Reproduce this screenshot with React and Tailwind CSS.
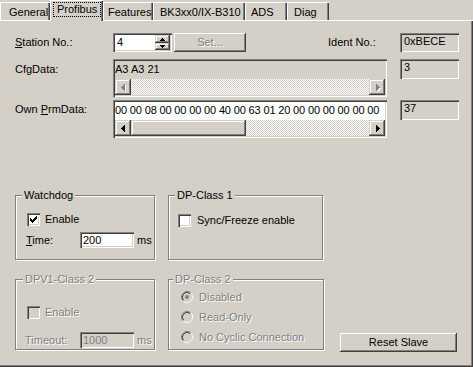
import React from "react";

const SUNK =
  "shadow-[inset_1px_1px_0_#808080,inset_2px_2px_0_#404040,inset_-1px_-1px_0_#ffffff,inset_-2px_-2px_0_#d4d0c8]";
const RAISED =
  "shadow-[inset_-1px_-1px_0_#404040,inset_1px_1px_0_#ffffff,inset_-2px_-2px_0_#808080]";
const SBTN =
  "shadow-[inset_-1px_-1px_0_#404040,inset_1px_1px_0_#d4d0c8,inset_-2px_-2px_0_#808080,inset_2px_2px_0_#ffffff]";
const DIS = "text-[#808080] [text-shadow:1px_1px_0_#ffffff]";
const CHECKER =
  "bg-[image:repeating-conic-gradient(#ffffff_0_25%,#d4d0c8_0_50%)] bg-size-[2px_2px] bg-[length:2px_2px]";
const TAB =
  "h-[18px] border-l border-t border-white shadow-[inset_-1px_0_0_#404040,inset_-2px_0_0_#808080] pt-[3px] whitespace-nowrap shrink-0";
const GROUP =
  "relative shrink-0 border border-[#808080] shadow-[1px_1px_0_#ffffff,inset_1px_1px_0_#ffffff]";

const SHAPES = {
  left: { w: 4, h: 7, r: [[0, 3, 1, 1], [1, 2, 1, 3], [2, 1, 1, 5], [3, 0, 1, 7]] },
  right: { w: 4, h: 7, r: [[3, 3, 1, 1], [2, 2, 1, 3], [1, 1, 1, 5], [0, 0, 1, 7]] },
  up: { w: 5, h: 3, r: [[2, 0, 1, 1], [1, 1, 3, 1], [0, 2, 5, 1]] },
  down: { w: 5, h: 3, r: [[0, 0, 5, 1], [1, 1, 3, 1], [2, 2, 1, 1]] },
};

function Arrow({ dir, disabled }) {
  const s = SHAPES[dir];
  return (
    <svg width={s.w + 1} height={s.h + 1} shapeRendering="crispEdges" className="block">
      {disabled &&
        s.r.map((r, i) => (
          <rect key={"s" + i} x={r[0] + 1} y={r[1] + 1} width={r[2]} height={r[3]} fill="#ffffff" />
        ))}
      {s.r.map((r, i) => (
        <rect key={i} x={r[0]} y={r[1]} width={r[2]} height={r[3]} fill={disabled ? "#808080" : "#000000"} />
      ))}
    </svg>
  );
}

function ScrollBar({ enabled }) {
  return (
    <div className="h-[16px] flex">
      <div className={"w-[16px] h-[16px] shrink-0 flex items-center justify-center pl-[1px] pt-[1px] " + SBTN}>
        <Arrow dir="left" disabled={!enabled} />
      </div>
      {enabled && <div className={"w-[115px] h-[16px] shrink-0 " + SBTN} />}
      <div className={"flex-1 h-[16px] " + CHECKER} />
      <div className={"w-[16px] h-[16px] shrink-0 flex items-center justify-center pl-[3px] pt-[1px] " + SBTN}>
        <Arrow dir="right" disabled={!enabled} />
      </div>
    </div>
  );
}

const CHECK = [
  [9, 3, 1, 1],
  [8, 4, 2, 1],
  [3, 5, 1, 1],
  [7, 5, 3, 1],
  [3, 6, 2, 1],
  [6, 6, 3, 1],
  [3, 7, 5, 1],
  [4, 8, 3, 1],
  [5, 9, 1, 1],
];

function Check({ checked, disabled }) {
  return (
    <div className={"w-[13px] h-[13px] shrink-0 " + SUNK + (disabled ? " bg-[#d4d0c8]" : " bg-white")}>
      {checked && (
        <svg width="13" height="13" shapeRendering="crispEdges" className="block">
          {CHECK.map((r, i) => (
            <rect key={i} x={r[0]} y={r[1]} width={r[2]} height={r[3]} fill="#000000" />
          ))}
        </svg>
      )}
    </div>
  );
}

function Radio({ checked, disabled }) {
  return (
    <svg width="12" height="12" className="block shrink-0">
      <circle cx="6" cy="6" r="4" fill={disabled ? "#d4d0c8" : "#ffffff"} />
      <path d="M2.11 9.89 A5.5 5.5 0 0 1 9.89 2.11" stroke="#808080" fill="none" />
      <path d="M9.89 2.11 A5.5 5.5 0 0 1 2.11 9.89" stroke="#ffffff" fill="none" />
      <path d="M2.82 9.18 A4.5 4.5 0 0 1 9.18 2.82" stroke="#404040" fill="none" />
      <path d="M9.18 2.82 A4.5 4.5 0 0 1 2.82 9.18" stroke="#d4d0c8" fill="none" />
      {checked && <circle cx="6" cy="6" r="2" fill={disabled ? "#808080" : "#000000"} />}
    </svg>
  );
}

export default function App() {
  return (
    <div className="w-[473px] h-[367px] bg-[#d4d0c8] flex flex-col overflow-hidden font-['Liberation_Sans',Arial,sans-serif] text-[11px] leading-[13px] text-black">
      {/* Tabs */}
      <div className="flex items-end h-[20px] shrink-0">
        <div className={TAB + " w-[50px] pl-[8px]"}>General</div>
        <div className="relative z-10 -mb-px h-[21px] w-[53px] shrink-0 bg-[#d4d0c8] border-l border-t border-white shadow-[inset_-1px_0_0_#404040,inset_-2px_0_0_#808080] pl-[2px] pt-[1px] whitespace-nowrap">
          <span className="inline-block border border-dotted border-black px-[3px] leading-[13px]">Profibus</span>
        </div>
        <div className={TAB + " w-[50px] pl-[4px]"}>Features</div>
        <div className={TAB + " w-[92px] pl-[6px]"}>BK3xx0/IX-B310</div>
        <div className={TAB + " w-[42px] pl-[5px]"}>ADS</div>
        <div className={TAB + " w-[42px] pl-[6px]"}>Diag</div>
      </div>

      {/* Panel */}
      <div className="flex-1 border-t border-white shadow-[inset_-1px_-1px_0_#404040,inset_-2px_-2px_0_#808080] flex flex-col pl-[15px]">
        {/* Row 1 */}
        <div className="flex h-[19px] mt-[12px]">
          <div className="w-[98px] shrink-0 self-center">
            <u>S</u>tation No.:
          </div>
          <div className={"w-[59px] h-[19px] shrink-0 flex p-[2px] " + SUNK}>
            <div className="flex-1 bg-white pl-[2px] pt-[1px]">4</div>
            <div className="w-[15px] flex flex-col">
              <div className={"h-[8px] flex items-center justify-center pl-[1px] pt-[1px] " + SBTN}>
                <Arrow dir="up" />
              </div>
              <div className={"h-[7px] flex items-center justify-center pl-[1px] " + SBTN}>
                <Arrow dir="down" />
              </div>
            </div>
          </div>
          <div className={"ml-[2px] w-[72px] h-[19px] shrink-0 flex items-center justify-center " + RAISED + " " + DIS}>
            Set...
          </div>
          <div className="ml-[82px] w-[72px] shrink-0 self-center">Ident No.:</div>
          <div className={"w-[59px] h-[19px] shrink-0 pl-[4px] pt-[2px] " + SUNK}>0xBECE</div>
        </div>

        {/* Row 2 */}
        <div className="flex mt-[7px]">
          <div className="w-[98px] shrink-0 pt-[4px]">CfgData:</div>
          <div className={"w-[274px] h-[38px] shrink-0 p-[2px] flex flex-col " + SUNK}>
            <div className="h-[18px] pt-[2px] whitespace-nowrap overflow-hidden">A3 A3 21</div>
            <ScrollBar enabled={false} />
          </div>
          <div className={"ml-[13px] w-[59px] h-[20px] shrink-0 pl-[4px] pt-[2px] " + SUNK}>3</div>
        </div>

        {/* Row 3 */}
        <div className="flex mt-[3px]">
          <div className="w-[98px] shrink-0 pt-[3px]">
            Own <u>P</u>rmData:
          </div>
          <div className={"w-[274px] h-[38px] shrink-0 p-[2px] flex flex-col " + SUNK}>
            <div className="h-[18px] pt-[2px] bg-white whitespace-nowrap overflow-hidden tracking-[-0.15px]">
              00 00 08 00 00 00 00 40 00 63 01 20 00 00 00 00 00 00
            </div>
            <ScrollBar enabled={true} />
          </div>
          <div className={"ml-[13px] w-[59px] h-[20px] shrink-0 pl-[4px] pt-[2px] " + SUNK}>37</div>
        </div>

        {/* Group row A */}
        <div className="flex mt-[57px]">
          <div className={GROUP + " w-[140px] h-[65px] pl-[11px] pt-[17px]"}>
            <span className="absolute left-[6px] top-[-7px] px-[2px] bg-[#d4d0c8]">Watchdog</span>
            <div className="flex items-center h-[13px]">
              <Check checked />
              <span className="ml-[5px]">Enable</span>
            </div>
            <div className="flex items-center h-[16px] mt-[6px] -ml-[1px]">
              <div className="w-[54px] shrink-0">
                <u>T</u>ime:
              </div>
              <div className={"w-[54px] h-[16px] shrink-0 bg-white pl-[3px] pt-[2px] " + SUNK}>200</div>
              <span className="ml-[3px]">ms</span>
            </div>
          </div>
          <div className={GROUP + " ml-[13px] w-[155px] h-[65px] pl-[9px] pt-[18px]"}>
            <span className="absolute left-[6px] top-[-7px] px-[2px] bg-[#d4d0c8]">DP-Class 1</span>
            <div className="flex items-center h-[13px]">
              <Check />
              <span className="ml-[6px] whitespace-nowrap">Sync/Freeze enable</span>
            </div>
          </div>
        </div>

        {/* Group row B */}
        <div className="flex mt-[19px] items-start">
          <div className={GROUP + " w-[140px] h-[71px] pl-[11px] pt-[26px]"}>
            <span className={"absolute left-[7px] top-[-7px] px-[2px] bg-[#d4d0c8] " + DIS}>DPV1-Class 2</span>
            <div className="flex items-center h-[13px]">
              <Check disabled />
              <span className={"ml-[5px] " + DIS}>Enable</span>
            </div>
            <div className="flex items-center h-[16px] mt-[13px] -ml-[2px]">
              <div className={"w-[55px] shrink-0 " + DIS}>Timeout:</div>
              <div className={"w-[54px] h-[16px] shrink-0 bg-[#d4d0c8] text-[#808080] pl-[3px] pt-[2px] " + SUNK}>
                1000
              </div>
              <span className={"ml-[3px] " + DIS}>ms</span>
            </div>
          </div>
          <div className={GROUP + " ml-[13px] w-[156px] h-[71px] pl-[12px] pt-[7px]"}>
            <span className={"absolute left-[4px] top-[-7px] px-[2px] bg-[#d4d0c8] " + DIS}>DP-Class 2</span>
            <div className="flex items-center h-[20px]">
              <Radio checked disabled />
              <span className={"ml-[6px] " + DIS}>Disabled</span>
            </div>
            <div className="flex items-center h-[20px]">
              <Radio disabled />
              <span className={"ml-[6px] " + DIS}>Read-Only</span>
            </div>
            <div className="flex items-center h-[20px]">
              <Radio disabled />
              <span className={"ml-[6px] whitespace-nowrap " + DIS}>No Cyclic Connection</span>
            </div>
          </div>
          <div className={"ml-[16px] mt-[54px] w-[117px] h-[19px] shrink-0 flex items-center justify-center " + RAISED}>
            Reset Slave
          </div>
        </div>
      </div>
    </div>
  );
}
